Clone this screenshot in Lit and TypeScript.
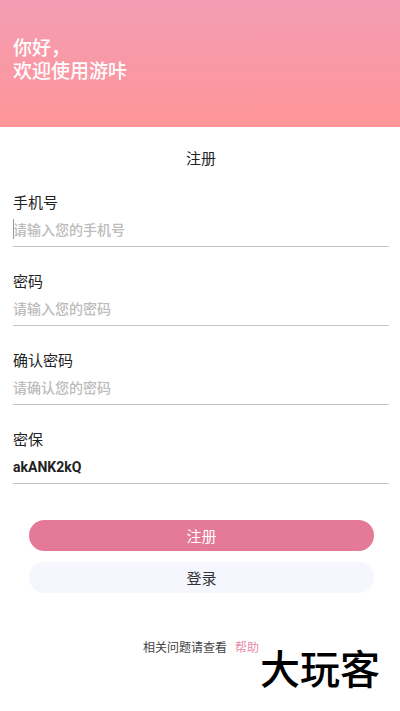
import { LitElement, css, html, nothing } from "lit";
import { customElement, property } from "lit/decorators.js";

@customElement("form-field")
class FormField extends LitElement {
  @property() label = "";
  @property() hint = "";
  @property() value = "";
  @property() kind = "text";
  @property({ type: Boolean }) caret = false;

  static styles = css`
    :host {
      display: block;
    }
    label {
      display: block;
      font-size: 15px;
      line-height: 22px;
      color: #222;
    }
    .box {
      position: relative;
      border-bottom: 1px solid #c4c4c4;
    }
    input {
      display: block;
      box-sizing: border-box;
      width: 100%;
      height: 32px;
      margin: 0;
      padding: 0;
      border: 0;
      outline: none;
      background: transparent;
      font-family: inherit;
      font-size: 14px;
      font-weight: 700;
      color: #222;
    }
    input::placeholder {
      font-weight: 500;
      color: #bcbcbc;
      opacity: 1;
    }
    .caret {
      position: absolute;
      left: 0;
      top: 5px;
      width: 1px;
      height: 20px;
      background: #999;
    }
  `;

  render() {
    return html`
      <label for="control">${this.label}</label>
      <div class="box">
        <input id="control" type=${this.kind} placeholder=${this.hint} .value=${this.value} />
        ${this.caret ? html`<span class="caret"></span>` : nothing}
      </div>
    `;
  }
}

@customElement("app-root")
class AppRoot extends LitElement {
  static styles = css`
    :host {
      display: block;
      position: relative;
      min-height: 100vh;
      background: #fff;
      color: #222;
      font-family: Roboto, "Noto Sans CJK SC", sans-serif;
    }
    header {
      box-sizing: border-box;
      min-height: 127px;
      padding: 37px 13px 0;
      background: linear-gradient(#f39db4, #ff9598);
      color: #fff;
      font-size: 19px;
      line-height: 23px;
      font-weight: 500;
    }
    header p {
      margin: 0;
    }
    main {
      padding: 21px 11px 0 13px;
    }
    h1 {
      margin: 0 0 22px;
      font-size: 15px;
      line-height: 22px;
      font-weight: 400;
      text-align: center;
    }
    .fields {
      display: grid;
      gap: 24px;
    }
    .actions {
      display: grid;
      gap: 11px;
      margin: 36px 15px 0 16px;
    }
    button {
      height: 31px;
      padding: 0;
      border: 0;
      border-radius: 16px;
      font-family: inherit;
      font-size: 15px;
      background: #f5f6fe;
      color: #333;
    }
    button.primary {
      background: #e57998;
      color: #fff;
    }
    footer {
      display: flex;
      justify-content: center;
      gap: 8px;
      margin-top: 46px;
      font-size: 12px;
      line-height: 18px;
      color: #444;
    }
    a {
      color: #e88ba6;
      text-decoration: none;
    }
    .mark {
      position: absolute;
      right: 20px;
      bottom: 20px;
      font-size: 40px;
      line-height: 40px;
      font-weight: 500;
      color: #000;
    }
  `;

  render() {
    return html`
      <header>
        <p>你好，</p>
        <p>欢迎使用游咔</p>
      </header>
      <main>
        <h1>注册</h1>
        <form @submit=${(e: Event) => e.preventDefault()}>
          <div class="fields">
            <form-field label="手机号" hint="请输入您的手机号" kind="tel" caret></form-field>
            <form-field label="密码" hint="请输入您的密码" kind="password"></form-field>
            <form-field label="确认密码" hint="请确认您的密码" kind="password"></form-field>
            <form-field label="密保" value="akANK2kQ"></form-field>
          </div>
          <div class="actions">
            <button class="primary" type="submit">注册</button>
            <button type="button">登录</button>
          </div>
        </form>
        <footer>
          <span>相关问题请查看</span>
          <a href="#help">帮助</a>
        </footer>
      </main>
      <div class="mark">大玩客</div>
    `;
  }
}
